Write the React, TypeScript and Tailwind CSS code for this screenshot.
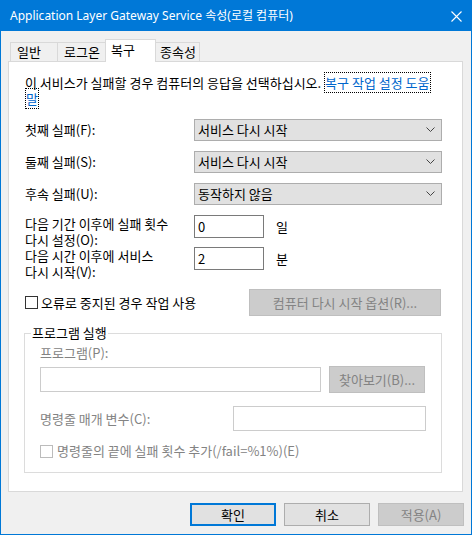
import type { ReactNode } from 'react';

const font = { fontFamily: '"Noto Sans CJK KR", "Noto Sans", sans-serif' };

function Chevron() {
  return (
    <svg width="9" height="6" viewBox="0 0 9 6" className="shrink-0">
      <path d="M0.5 0.5 L4.5 4.5 L8.5 0.5" fill="none" stroke="#444" strokeWidth="1" />
    </svg>
  );
}

function Combo({ value }: { value: string }) {
  return (
    <div className="flex h-[22px] w-[248px] items-center justify-between border border-[#adadad] bg-[#e1e1e1] pl-[3px] pr-[6px]">
      <span>{value}</span>
      <Chevron />
    </div>
  );
}

function Checkbox({ disabled }: { disabled?: boolean }) {
  return (
    <div
      className={`h-[13px] w-[13px] shrink-0 border bg-white ${
        disabled ? 'border-[#bcbcbc]' : 'border-[#333333]'
      }`}
    />
  );
}

function Button({
  children,
  kind = 'normal',
  className = '',
}: {
  children: ReactNode;
  kind?: 'normal' | 'default' | 'disabled';
  className?: string;
}) {
  const styles = {
    normal: 'border border-[#adadad] bg-[#e1e1e1] text-black',
    default: 'border-2 border-[#0078d7] bg-[#e1e1e1] text-black',
    disabled: 'border border-[#bfbfbf] bg-[#cccccc] text-[#838383]',
  };
  return (
    <div className={`flex items-center justify-center ${styles[kind]} ${className}`}>
      {children}
    </div>
  );
}

export default function App() {
  const tabs = [
    { label: '일반', w: 'w-[47px]' },
    { label: '로그온', w: 'w-[48px]' },
  ];

  return (
    <div
      className="flex h-[535px] w-[472px] flex-col border border-[#0078d7] text-[13px] leading-[16px] text-black"
      style={font}
    >
      <div className="flex h-[30px] shrink-0 items-center justify-between bg-[#0078d7] pl-[9px] pr-[9px] text-[12px] text-white">
        <span style={{ fontFamily: '"Noto Sans", "Noto Sans CJK KR", sans-serif' }}>
          Application Layer Gateway Service 속성(로컬 컴퓨터)
        </span>
        <svg width="11" height="11" viewBox="0 0 11 11">
          <path d="M0.5 0.5 L10.5 10.5 M10.5 0.5 L0.5 10.5" stroke="white" strokeWidth="1.1" />
        </svg>
      </div>

      <div className="flex flex-1 flex-col bg-[#f0f0f0] px-[7px] pt-[8px]">
        <div className="flex h-[22px] items-end pl-[2px]">
          {tabs.map((t) => (
            <div
              key={t.label}
              className={`flex h-[19px] ${t.w} items-center border-l border-t border-[#d9d9d9] pl-[6px]`}
            >
              {t.label}
            </div>
          ))}
          <div className="relative z-10 -mb-px flex h-[23px] w-[51px] items-start border-x border-t border-[#d9d9d9] bg-white pl-[5px] pt-[2px]">
            복구
          </div>
          <div className="flex h-[19px] w-[44px] items-center border-r border-t border-[#d9d9d9] pl-[4px]">
            종속성
          </div>
        </div>

        <div className="flex h-[431px] w-[455px] shrink-0 flex-col border border-[#d9d9d9] bg-white pl-[16px] pt-[13px]">
          <div className="whitespace-nowrap">
            이 서비스가 실패할 경우 컴퓨터의 응답을 선택하십시오.{' '}
            <span className="border border-dotted border-black text-[#0066cc]">복구 작업 설정 도움</span>
            <br />
            <span className="border border-dotted border-black text-[#0066cc]">말</span>
          </div>

          <div className="mt-[12px] flex flex-col gap-[10px]">
            <div className="flex h-[22px] items-center">
              <span className="w-[169px]">첫째 실패(F):</span>
              <Combo value="서비스 다시 시작" />
            </div>
            <div className="flex h-[22px] items-center">
              <span className="w-[169px]">둘째 실패(S):</span>
              <Combo value="서비스 다시 시작" />
            </div>
            <div className="flex h-[22px] items-center">
              <span className="w-[169px]">후속 실패(U):</span>
              <Combo value="동작하지 않음" />
            </div>
          </div>

          <div className="mt-[10px] flex h-[32px] items-start">
            <span className="mt-[1px] w-[169px]">
              다음 기간 이후에 실패 횟수
              <br />
              다시 설정(O):
            </span>
            <div className="flex h-[23px] w-[70px] items-center border border-[#7a7a7a] pl-[3px]">0</div>
            <span className="ml-[12px] leading-[23px]">일</span>
          </div>
          <div className="flex h-[32px] items-start">
            <span className="mt-[1px] w-[169px]">
              다음 시간 이후에 서비스
              <br />
              다시 시작(V):
            </span>
            <div className="flex h-[23px] w-[70px] items-center border border-[#7a7a7a] pl-[3px]">2</div>
            <span className="ml-[12px] leading-[23px]">분</span>
          </div>

          <div className="mt-[10px] flex h-[27px] items-center">
            <div className="flex w-[224px] items-center gap-[3px]">
              <Checkbox />
              <span>오류로 중지된 경우 작업 사용</span>
            </div>
            <Button kind="disabled" className="h-[27px] w-[192px]">
              컴퓨터 다시 시작 옵션(R)...
            </Button>
          </div>

          <fieldset className="mt-[9px] -ml-px w-[418px] border border-[#dcdcdc] pb-[13px] pl-[15px]">
            <legend className="-ml-[9px] px-[1px]">프로그램 실행</legend>
            <div className="pt-[4px] text-[#838383]">프로그램(P):</div>
            <div className="mt-[5px] flex h-[27px] items-center">
              <div className="h-[25px] w-[281px] border border-[#cccccc] bg-white" />
              <Button kind="disabled" className="ml-[8px] h-[27px] w-[96px]">
                찾아보기(B)...
              </Button>
            </div>
            <div className="mt-[13px] flex h-[25px] items-center">
              <span className="w-[193px] text-[#838383]">명령줄 매개 변수(C):</span>
              <div className="h-[25px] w-[193px] border border-[#cccccc] bg-white" />
            </div>
            <div className="mt-[12px] flex h-[16px] items-center gap-[4px]">
              <Checkbox disabled />
              <span className="text-[#838383]">명령줄의 끝에 실패 횟수 추가(/fail=%1%)(E)</span>
            </div>
          </fieldset>
        </div>

        <div className="mt-[11px] flex justify-end gap-[8px]">
          <Button kind="default" className="h-[23px] w-[86px]">
            확인
          </Button>
          <Button className="h-[23px] w-[86px]">취소</Button>
          <Button kind="disabled" className="h-[23px] w-[86px]">
            적용(A)
          </Button>
        </div>
      </div>
    </div>
  );
}
